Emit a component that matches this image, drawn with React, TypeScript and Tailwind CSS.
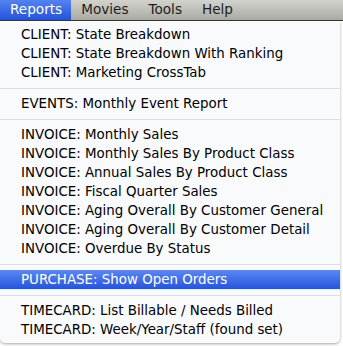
import React from 'react'

type Entry = { label: string; active?: boolean } | 'sep'

const entries: Entry[] = [
  { label: 'CLIENT: State Breakdown' },
  { label: 'CLIENT: State Breakdown With Ranking' },
  { label: 'CLIENT: Marketing CrossTab' },
  'sep',
  { label: 'EVENTS: Monthly Event Report' },
  'sep',
  { label: 'INVOICE: Monthly Sales' },
  { label: 'INVOICE: Monthly Sales By Product Class' },
  { label: 'INVOICE: Annual Sales By Product Class' },
  { label: 'INVOICE: Fiscal Quarter Sales' },
  { label: 'INVOICE: Aging Overall By Customer General' },
  { label: 'INVOICE: Aging Overall By Customer Detail' },
  { label: 'INVOICE: Overdue By Status' },
  'sep',
  { label: 'PURCHASE: Show Open Orders', active: true },
  'sep',
  { label: 'TIMECARD: List Billable / Needs Billed' },
  { label: 'TIMECARD: Week/Year/Staff (found set)' }
]

const MenuTitle = ({ label, active }: { label: string; active?: boolean }) => (
  <div
    className={
      active
        ? 'h-full flex items-center pl-[10px] pr-[9px] bg-linear-to-b from-[#5582f2] to-[#2352dc] text-white'
        : 'h-full flex items-center px-[10px] text-[#1c1c1c]'
    }
  >
    {label}
  </div>
)

export default function App() {
  return (
    <div className="w-[343px] h-[346px] bg-white overflow-hidden font-['DejaVu_Sans',sans-serif] leading-none">
      <div className="flex h-[21px] text-[13.6px] bg-linear-to-b from-[#d2d3cc] to-[#a9aba3] border-b border-[#3a3a3a]">
        <MenuTitle label="Reports" active />
        <MenuTitle label="Movies" />
        <MenuTitle label="Tools" />
        <MenuTitle label="Help" />
      </div>
      <div className="w-[340px] text-[13.4px] bg-[#f9fafb] rounded-b-[5px] py-1 shadow-[0_1px_3px_rgba(0,0,0,0.35)]">
        {entries.map((e, i) =>
          e === 'sep' ? (
            <div key={i} className="h-[12px] flex items-center">
              <div className="h-px w-full bg-[#dcdee2]" />
            </div>
          ) : (
            <div
              key={i}
              className={
                e.active
                  ? 'h-[19px] flex items-center pl-[21px] text-white bg-linear-to-b from-[#5b87f3] to-[#2653dc]'
                  : 'h-[19px] flex items-center pl-[21px] text-black'
              }
            >
              {e.label}
            </div>
          )
        )}
      </div>
    </div>
  )
}
